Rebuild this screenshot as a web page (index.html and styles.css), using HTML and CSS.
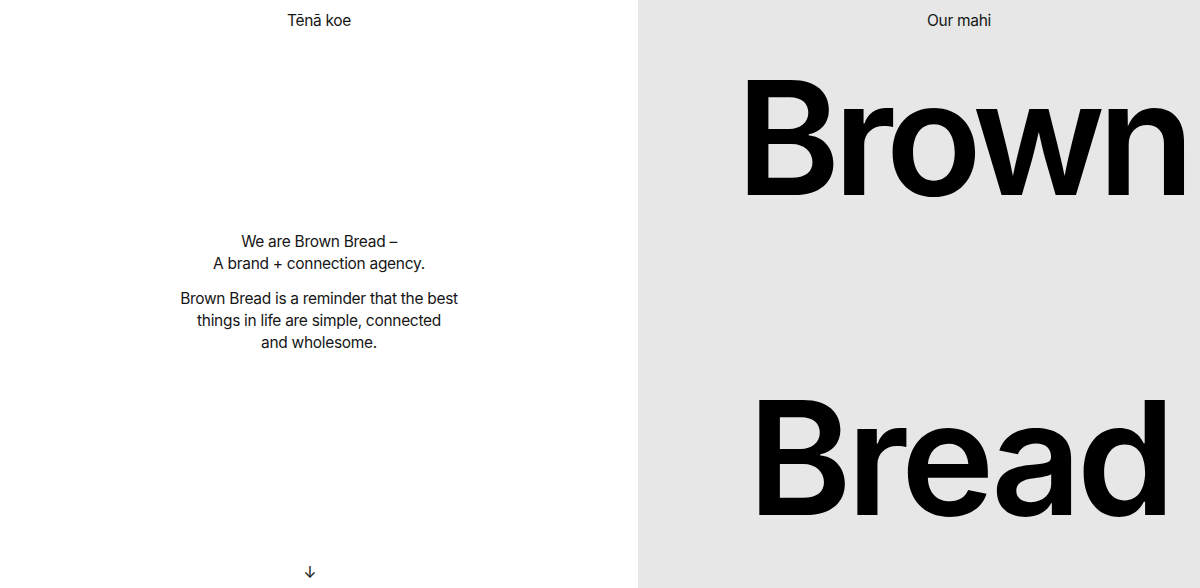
FILE: index.html
```html
<!DOCTYPE html>
<html lang="en">
<head>
<meta charset="utf-8">
<title>Brown Bread</title>
<link rel="stylesheet" href="styles.css">
</head>
<body>
<main class="split">
  <section class="panel panel-left">
    <header class="panel-title">Tēnā koe</header>
    <div class="intro">
      <p>We are Brown Bread –<br>A brand + connection agency.</p>
      <p>Brown Bread is a reminder that the best<br>things in life are simple, connected<br>and wholesome.</p>
    </div>
    <div class="scroll-arrow">↓</div>
  </section>
  <section class="panel panel-right">
    <header class="panel-title">Our mahi</header>
    <div class="big-words">
      <div class="big-word">Brown</div>
      <div class="big-word big-word-wide">Bread</div>
    </div>
  </section>
</main>
</body>
</html>
```

FILE: styles.css
```css
html, body {
  margin: 0;
  padding: 0;
  height: 100%;
}
body {
  font-family: "Inter", "Helvetica Neue", Arial, sans-serif;
  color: #161616;
  background: #fff;
  overflow: hidden;
}
.split {
  display: grid;
  grid-template-columns: 638px 1fr;
  height: 588px;
}
.panel {
  display: flex;
  flex-direction: column;
  align-items: center;
  height: 588px;
  box-sizing: border-box;
  overflow: hidden;
}
.panel-left {
  background: #fff;
}
.panel-right {
  background: #e7e7e7;
  padding-left: 80px;
}
.panel-title {
  font-size: 15.5px;
  letter-spacing: -0.3px;
  line-height: 20px;
  padding-top: 11px;
}
.intro {
  flex: 1;
  display: flex;
  flex-direction: column;
  justify-content: center;
  text-align: center;
  font-size: 15.5px;
  letter-spacing: -0.3px;
  line-height: 22px;
  padding-bottom: 8px;
}
.intro p {
  margin: 0 0 13px;
}
.intro p:last-child {
  margin-bottom: 0;
}
.scroll-arrow {
  font-size: 16px;
  line-height: 20px;
  padding-bottom: 6px;
  margin-right: 18px;
}
.big-words {
  align-self: stretch;
  display: flex;
  flex-direction: column;
  align-items: center;
  gap: 162px;
  padding-left: 6px;
  margin-top: 28px;
}
.big-word {
  font-size: 158px;
  font-weight: 600;
  letter-spacing: -7px;
  line-height: 158px;
  color: #000;
}
.big-word-wide {
  letter-spacing: -5px;
  margin-left: -6px;
}
```
